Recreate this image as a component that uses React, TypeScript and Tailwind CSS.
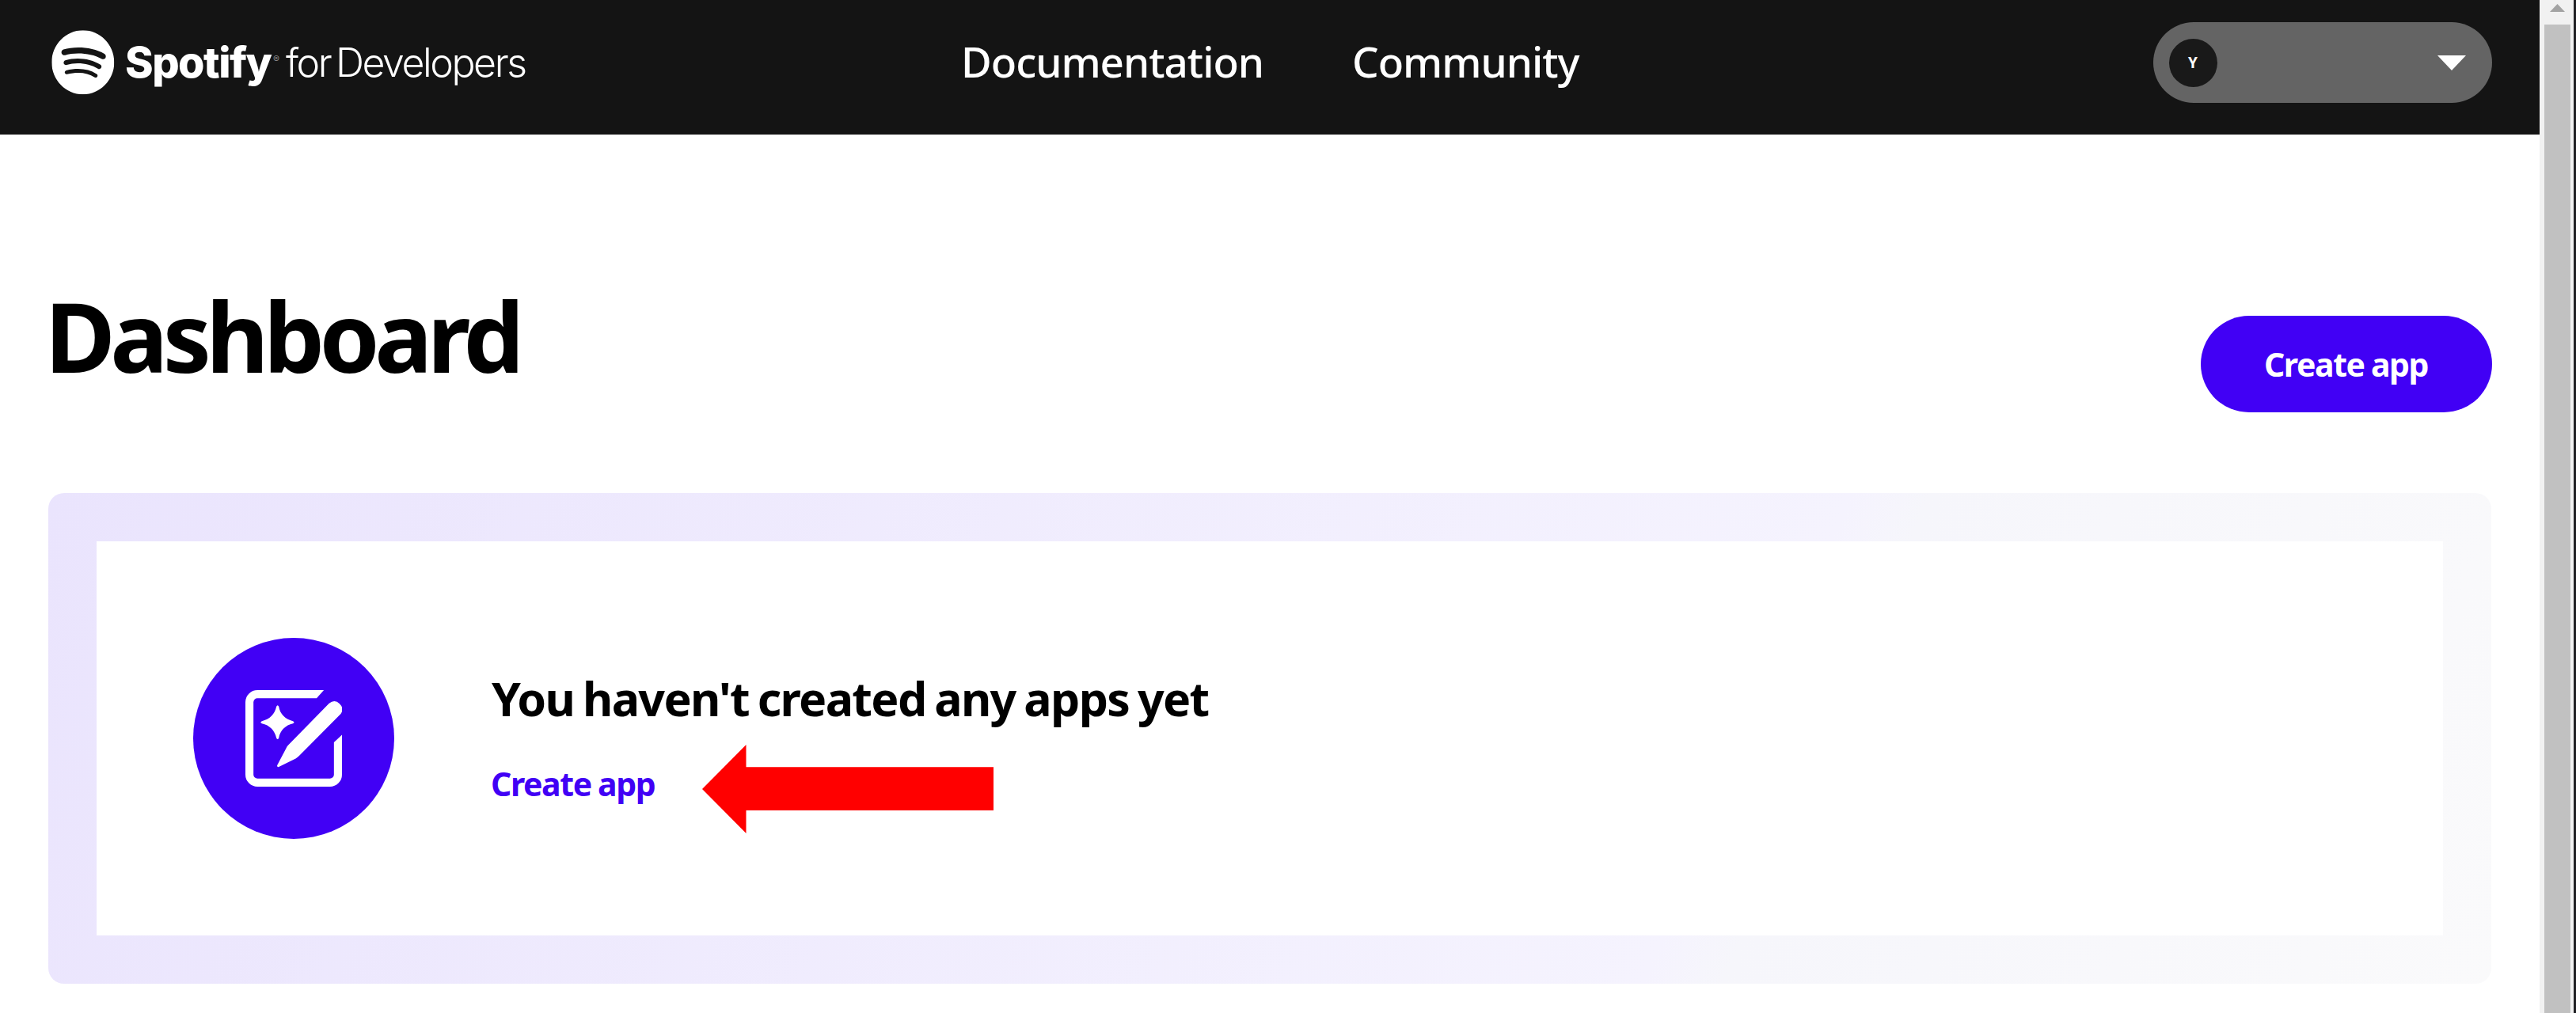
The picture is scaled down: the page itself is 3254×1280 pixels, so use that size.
import { SiSpotify } from 'react-icons/si';

function Logo() {
  return (
    <a href="#" className="block h-[170px] w-[620px]" aria-label="Spotify for Developers">
      <svg width="620" height="170" viewBox="60 0 620 170" fill="#fff" fontFamily="Inter, sans-serif">
        <g transform="translate(65.3 38.3) scale(3.292 3.375)">
          <SiSpotify size={24} color="#fff" />
        </g>
        <text x="158" y="98" fontSize="54" fontWeight="800" textLength="186">Spotify</text>
        <text x="345" y="79" fontSize="12" fill="#8a8a8a">®</text>
        <text x="361" y="97.3" fontSize="50" fontWeight="300" wordSpacing="-5" textLength="305">for Developers</text>
      </svg>
    </a>
  );
}

function Header() {
  return (
    <header className="flex h-[170px] items-start bg-[#141414] pl-[60px] text-white">
      <Logo />
      <nav className="mt-[51px] flex text-[53px] leading-none font-medium tracking-[-1px]">
        <a href="#" className="ml-[534px] w-[494px]">Documentation</a>
        <a href="#">Community</a>
      </nav>
      <button className="mt-7 mr-[60.5px] ml-auto flex h-[102px] w-[428px] items-center rounded-full bg-[#646464] pr-[33px] pl-5">
        <span className="flex size-[61px] items-center justify-center rounded-full bg-[#191919] text-[19px] leading-none font-bold">
          Y
        </span>
        <svg className="mt-px ml-auto" width="36" height="19" viewBox="0 0 36 19">
          <path d="M0 0h36L18 19z" fill="#fff" />
        </svg>
      </button>
    </header>
  );
}

function CreateIcon() {
  return (
    <div className="mt-[122px] flex size-[254px] items-center justify-center rounded-full bg-[#4100f5]">
      <svg width="122" height="122" viewBox="0 0 24 24" fill="#fff">
        <path d="M3 0h16.5l-1.8 2H3a1 1 0 0 0-1 1v18a1 1 0 0 0 1 1h18a1 1 0 0 0 1-1v-8l2-1.9v9.9a3 3 0 0 1-3 3H3a3 3 0 0 1-3-3V3a3 3 0 0 1 3-3z" />
        <path d="M20.8 3.3q1.4-1.1 2.6.1t.3 2.5L13.4 16.3q-.3.3-.9.7l-4.2 2.1q-.5.1-.4-.4l2.2-4.2q.2-.5.5-.8z" />
        <path d="M7.7 4.1Q8 3.5 8.3 4.1C8.6 6 10 7.3 11.8 7.7Q12.4 8 11.8 8.3C10 8.7 8.6 10 8.3 11.9Q8 12.5 7.7 11.9C7.3 10 6 8.7 4.1 8.3Q3.5 8 4.1 7.7C6 7.3 7.3 6 7.7 4.1z" />
      </svg>
    </div>
  );
}

function EmptyState() {
  return (
    <section className="mx-auto mt-[102px] h-[620px] w-[3086px] rounded-[20px] bg-[linear-gradient(113deg,#eae4fd_0%,#f5f3fe_68%,#f6f6fb_71%,#fafafb_100%)] p-[61px]">
      <div className="flex h-[498px] items-start bg-white pl-[122px]">
        <CreateIcon />
        <div className="mt-[169px] ml-[123px]">
          <h2 className="text-[59px] leading-none font-bold tracking-[-1.65px] whitespace-nowrap text-black [word-spacing:-3px]">
            You haven't created any apps yet
          </h2>
          <div className="mt-[29px] flex h-28 items-center">
            <a href="#" className="mb-[14px] ml-[-1px] w-[267px] text-[41px] leading-none font-bold tracking-[-1.4px] text-[#4100f5] [word-spacing:-1px]">
              Create app
            </a>
            <svg width="368" height="112" viewBox="0 0 368 112">
              <path d="M0 56 55.5 0v28.3H368v54.7H55.5V112z" fill="#f00" />
            </svg>
          </div>
        </div>
      </div>
    </section>
  );
}

function Scrollbar() {
  return (
    <div className="flex h-[1280px] w-[46px] shrink-0">
      <div className="flex w-[43px] flex-col items-start bg-[#f1f1f1] pl-[5.5px]">
        <svg className="mt-[5px] ml-[7px]" width="19" height="10" viewBox="0 0 19 10">
          <path d="M9.5 0 19 10H0z" fill="#a3a3a3" />
        </svg>
        <div className="mt-4 w-[33px] grow bg-[#c1c1c1]" />
      </div>
      <div className="w-[3px] bg-[#202024]" />
    </div>
  );
}

export default function App() {
  return (
    <div className="flex h-[1280px] w-[3254px] overflow-hidden bg-white font-['Noto_Sans',sans-serif]">
      <div className="w-[3208px]">
        <Header />
        <main>
          <div className="flex h-[351px] items-start justify-between pr-[60.5px] pl-[56.5px]">
            <h1 className="mt-[193px] text-[122px] leading-none font-bold tracking-[-6.6px] text-black">Dashboard</h1>
            <button className="mt-[229px] h-[122px] w-[368px] rounded-full bg-[#4100f5] text-[41px] leading-none font-bold tracking-[-1.4px] text-white [word-spacing:-1px]">
              Create app
            </button>
          </div>
          <EmptyState />
        </main>
      </div>
      <Scrollbar />
    </div>
  );
}
